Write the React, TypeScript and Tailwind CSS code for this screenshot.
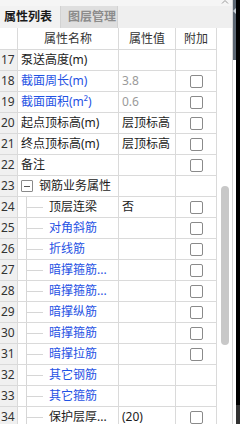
import React from "react";

type Row = {
  n: number;
  name: string;
  color: "k" | "b";
  value?: string;
  gray?: boolean;
  box: boolean;
  level: 0 | 1 | 2;
};

const rows: Row[] = [
  { n: 17, name: "泵送高度(m)", color: "k", box: false, level: 0 },
  { n: 18, name: "截面周长(m)", color: "b", value: "3.8", gray: true, box: true, level: 0 },
  { n: 19, name: "截面面积(m²)", color: "b", value: "0.6", gray: true, box: true, level: 0 },
  { n: 20, name: "起点顶标高(m)", color: "k", value: "层顶标高", box: true, level: 0 },
  { n: 21, name: "终点顶标高(m)", color: "k", value: "层顶标高", box: true, level: 0 },
  { n: 22, name: "备注", color: "k", box: true, level: 0 },
  { n: 23, name: "钢筋业务属性", color: "k", box: false, level: 1 },
  { n: 24, name: "顶层连梁", color: "k", value: "否", box: true, level: 2 },
  { n: 25, name: "对角斜筋", color: "b", box: true, level: 2 },
  { n: 26, name: "折线筋", color: "b", box: true, level: 2 },
  { n: 27, name: "暗撑箍筋...", color: "b", box: true, level: 2 },
  { n: 28, name: "暗撑箍筋...", color: "b", box: true, level: 2 },
  { n: 29, name: "暗撑纵筋", color: "b", box: true, level: 2 },
  { n: 30, name: "暗撑箍筋", color: "b", box: true, level: 2 },
  { n: 31, name: "暗撑拉筋", color: "b", box: true, level: 2 },
  { n: 32, name: "其它钢筋", color: "b", box: false, level: 2 },
  { n: 33, name: "其它箍筋", color: "b", box: false, level: 2 },
  { n: 34, name: "保护层厚...", color: "k", value: "(20)", box: true, level: 2 },
];

function Check() {
  return <span className="block h-[13px] w-[13px] rounded-[2px] border border-[#8a8a8a] bg-white" />;
}

function NameCell({ row }: { row: Row }) {
  const color = row.color === "b" ? "text-[#1f52e4]" : "text-[#1c1c1c]";
  if (row.level === 1) {
    return (
      <div className="flex w-[101px] shrink-0 items-center border-r border-[#dadada] pl-[3px]">
        <span className="flex h-[12px] w-[12px] items-center justify-center rounded-[1px] border border-[#8a8a8a]">
          <span className="block h-px w-[6px] bg-[#555]" />
        </span>
        <span className={`ml-[6px] whitespace-nowrap ${color}`}>{row.name}</span>
      </div>
    );
  }
  if (row.level === 2) {
    return (
      <div className="flex w-[101px] shrink-0 border-r border-[#dadada]">
        <span className="w-[8px] shrink-0" />
        <span className="w-px shrink-0 bg-[#d6d6d6]" />
        <span className="flex w-[16px] shrink-0 items-center">
          <span className="block h-px w-full bg-[#d6d6d6]" />
        </span>
        <span className={`ml-[6px] whitespace-nowrap leading-[20px] ${color}`}>{row.name}</span>
      </div>
    );
  }
  return (
    <div className={`w-[101px] shrink-0 whitespace-nowrap border-r border-[#dadada] pl-[3px] leading-[20px] ${color}`}>
      {row.name}
    </div>
  );
}

export default function App() {
  return (
    <div
      className="flex h-[424px] w-[240px] overflow-hidden bg-white text-[12px]"
      style={{ fontFamily: '"Noto Sans", "Noto Sans CJK SC", sans-serif' }}
    >
      <div className="flex w-[233px] shrink-0 flex-col border-r border-[#d6d6d6]">
        {/* collapse strip */}
        <div className="flex h-[6px] shrink-0 items-start justify-end bg-[#f5f5f5] pr-[3px]">
          <svg width="8" height="5" viewBox="0 0 8 5" className="-mt-px">
            <path d="M1 4.5 L4 1.5 L7 4.5" fill="none" stroke="#9a9a9a" strokeWidth="1" />
          </svg>
        </div>

        {/* tabs */}
        <div className="flex h-[22px] shrink-0 bg-[#efefef]">
          <div className="flex w-[60px] items-center bg-[#f2f2f2] pl-[4px] font-bold text-[#1a1a1a]">属性列表</div>
          <div className="flex w-[58px] items-center border-x border-[#d2d2d2] bg-[#dfdfdf] pl-[7px] font-bold text-[#8c8c8c]">
            图层管理
          </div>
        </div>

        <div className="flex min-h-0 flex-1">
          {/* table */}
          <div className="w-[217px] shrink-0 border-r border-[#dadada]">
            <div className="flex h-[22px] border-b border-[#dadada] text-[#333]">
              <div className="w-[18px] shrink-0 border-r border-[#dadada]" />
              <div className="w-[101px] shrink-0 border-r border-[#dadada] text-center leading-[21px]">属性名称</div>
              <div className="w-[57px] shrink-0 border-r border-[#dadada] text-center leading-[21px]">属性值</div>
              <div className="flex-1 text-center leading-[21px]">附加</div>
            </div>
            {rows.map((row) => (
              <div key={row.n} className="flex h-[21px] border-b border-[#dadada]">
                <div className="w-[18px] shrink-0 border-r border-[#dadada] bg-[#f0f0f0] pl-[1px] leading-[20px] text-[#333]">
                  {row.n}
                </div>
                <NameCell row={row} />
                <div
                  className={`w-[57px] shrink-0 whitespace-nowrap border-r border-[#dadada] pl-[3px] leading-[20px] ${
                    row.gray ? "text-[#9a9a9a]" : "text-[#1c1c1c]"
                  }`}
                >
                  {row.value}
                </div>
                <div className="flex flex-1 items-center justify-center">{row.box && <Check />}</div>
              </div>
            ))}
          </div>

          {/* scrollbar */}
          <div className="w-[14px] shrink-0 pl-[4px]">
            <div className="mt-[158px] h-[159px] w-[8px] rounded-full bg-[#c8c8c8]" />
          </div>
        </div>
      </div>

      {/* right edge */}
      <div className="flex w-[3px] shrink-0 flex-col">
        <div className="flex h-[60px] flex-col items-end bg-[#5b6672] pt-[8px]">
          <span className="block h-0 w-0 border-y-[3px] border-r-[3px] border-y-transparent border-r-[#c9d0d6]" />
        </div>
        <div className="flex-1 bg-white" />
      </div>
      <div className="flex w-[4px] shrink-0 flex-col">
        <div className="h-[405px] bg-black" />
        <div className="flex-1 bg-[#333]" />
      </div>
    </div>
  );
}
